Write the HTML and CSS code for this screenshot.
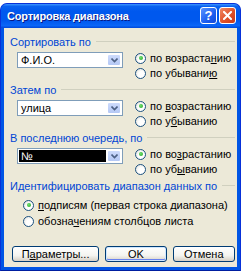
FILE: index.html
```html
<!DOCTYPE html>
<html lang="ru">
<head>
    <meta charset="UTF-8">
    <title>Сортировка диапазона</title>
    <link rel="stylesheet" href="styles.css">
</head>
<body>

    <!-- Dialog window -->
    <div class="window">
        <div class="titlebar">
            <span class="title">Сортировка диапазона</span>
            <div class="title-buttons">
                <span class="tbtn help">?</span>
                <span class="tbtn close">
                    <svg width="9" height="9" viewBox="0 0 9 9">
                        <path d="M1 1 L8 8 M8 1 L1 8" stroke="#fff" stroke-width="2" stroke-linecap="square"/>
                    </svg>
                </span>
            </div>
        </div>

        <div class="client">
            <!-- Sort by -->
            <div class="legend"><span>Сортировать по</span></div>
            <div class="sort-row">
                <div class="combo">
                    <span class="combo-text">Ф.И.О.</span>
                    <span class="combo-btn"><svg width="7" height="5" viewBox="0 0 7 5"><path d="M0.5 0.5 L3.5 3.5 L6.5 0.5" fill="none" stroke="#4d6185" stroke-width="1.6"/></svg></span>
                </div>
                <div class="radios">
                    <div class="radio checked"><span class="circle"></span><span>по возраста<u>н</u>ию</span></div>
                    <div class="radio"><span class="circle"></span><span>по убывани<u>ю</u></span></div>
                </div>
            </div>

            <!-- Then by -->
            <div class="legend"><span>Затем по</span></div>
            <div class="sort-row">
                <div class="combo">
                    <span class="combo-text">улица</span>
                    <span class="combo-btn"><svg width="7" height="5" viewBox="0 0 7 5"><path d="M0.5 0.5 L3.5 3.5 L6.5 0.5" fill="none" stroke="#4d6185" stroke-width="1.6"/></svg></span>
                </div>
                <div class="radios">
                    <div class="radio checked"><span class="circle"></span><span>по <u>в</u>озрастанию</span></div>
                    <div class="radio"><span class="circle"></span><span>по у<u>б</u>ыванию</span></div>
                </div>
            </div>

            <!-- Last by -->
            <div class="legend"><span>В последнюю очередь, по</span></div>
            <div class="sort-row">
                <div class="combo">
                    <span class="combo-text selected">№</span>
                    <span class="combo-btn"><svg width="7" height="5" viewBox="0 0 7 5"><path d="M0.5 0.5 L3.5 3.5 L6.5 0.5" fill="none" stroke="#4d6185" stroke-width="1.6"/></svg></span>
                </div>
                <div class="radios">
                    <div class="radio checked"><span class="circle"></span><span>по во<u>з</u>растанию</span></div>
                    <div class="radio"><span class="circle"></span><span>по уб<u>ы</u>ванию</span></div>
                </div>
            </div>

            <!-- Range identification -->
            <div class="legend"><span>Идентифицировать диапазон данных по</span></div>
            <div class="ident">
                <div class="radio checked"><span class="circle"></span><span><u>п</u>одписям (первая строка диапазона)</span></div>
                <div class="radio"><span class="circle"></span><span>обозна<u>ч</u>ениям столбцов листа</span></div>
            </div>

            <!-- Buttons -->
            <div class="buttons">
                <span class="btn btn-params">П<u>а</u>раметры...</span>
                <span class="btn btn-default">OK</span>
                <span class="btn btn-cancel">Отмена</span>
            </div>
        </div>
    </div>

</body>
</html>
```

FILE: styles.css
```css
/* Page */
body {
    margin: 0;
    width: 243px;
    height: 276px;
    overflow: hidden;
    background: #fff;
    font-family: "Liberation Sans", Arial, sans-serif;
    font-size: 11px;
    color: #000;
}

/* Window frame */
.window {
    margin-top: 3px;
    width: 241px;
    height: 268px;
    box-sizing: border-box;
    display: flex;
    flex-direction: column;
    background: #0055e5;
    border: 1px solid #0831d9;
    border-bottom-color: #001ea0;
    border-radius: 7px 7px 0 0;
}

/* Title bar */
.titlebar {
    height: 24px;
    display: flex;
    align-items: flex-start;
    justify-content: space-between;
    padding: 0 4px 0 6px;
    border-radius: 6px 6px 0 0;
    background: linear-gradient(to bottom, #3d95ff 0%, #0a62f0 10%, #0058ee 30%, #0058ee 70%, #0a66f7 90%, #0048d8 100%);
}

.title {
    margin-top: 6px;
    color: #fff;
    font-weight: bold;
    font-size: 11px;
    letter-spacing: -0.2px;
    text-shadow: 1px 1px #0a1883;
}

.title-buttons {
    margin-top: 3px;
    display: flex;
    gap: 2px;
}

.tbtn {
    width: 17px;
    height: 17px;
    box-sizing: border-box;
    display: flex;
    align-items: center;
    justify-content: center;
    border: 1px solid #fff;
    border-radius: 3px;
    color: #fff;
    font-weight: bold;
    font-size: 13px;
}

.help {
    background: linear-gradient(135deg, #5b93ff 0%, #1c5ef0 60%, #1248d8 100%);
}

.close {
    background: linear-gradient(135deg, #f08a66 0%, #e0522a 55%, #c8391a 100%);
}

/* Client area */
.client {
    flex: 1;
    margin: 0 3px 3px;
    padding: 7px 2px 0 6px;
    background: #ece9d8;
}

/* Group label with line */
.legend {
    display: flex;
    align-items: center;
    height: 13px;
    color: #0046d5;
}

.legend::after {
    content: "";
    flex: 1;
    height: 1px;
    margin-left: 5px;
    background: #d0d0bf;
}

.legend + .sort-row {
    margin-top: 3px;
}

.sort-row + .legend {
    margin-top: 3px;
}

.sort-row {
    display: flex;
    align-items: flex-start;
}

/* Combo box */
.combo {
    margin: 1px 0 0 7px;
    width: 106px;
    height: 16px;
    box-sizing: border-box;
    display: flex;
    padding: 1px;
    background: #fff;
    border: 1px solid #7f9db9;
}

.combo-text {
    flex: 1;
    padding-left: 2px;
    line-height: 12px;
}

.combo-text.selected {
    background: #000;
    color: #fff;
    margin-right: 1px;
}

.combo-btn {
    width: 14px;
    display: flex;
    align-items: center;
    justify-content: center;
    box-sizing: border-box;
    border: 1px solid #fff;
    border-radius: 2px;
    background: linear-gradient(to bottom, #cddbfc, #b4c8f5);
}

/* Radio buttons */
.radios {
    margin-left: 12px;
    display: flex;
    flex-direction: column;
    gap: 1px;
}

.radio {
    display: flex;
    align-items: center;
    height: 14px;
    white-space: nowrap;
}

.circle {
    width: 11px;
    height: 11px;
    box-sizing: border-box;
    margin-right: 4px;
    border: 1px solid #1c5180;
    border-radius: 50%;
    background: radial-gradient(circle at 65% 65%, #fff 40%, #dcdcd4 100%);
    display: flex;
    align-items: center;
    justify-content: center;
}

.radio.checked .circle::after {
    content: "";
    width: 4px;
    height: 4px;
    border-radius: 50%;
    background: radial-gradient(circle at 40% 40%, #6ee06e, #21a121);
}

/* Range identification */
.legend + .ident {
    margin-top: 6px;
}

.ident {
    padding-left: 13px;
    display: flex;
    flex-direction: column;
    gap: 2px;
}

/* Dialog buttons */
.buttons {
    margin-top: 18px;
    display: flex;
    gap: 6px;
    padding-left: 2px;
}

.btn {
    width: 62px;
    height: 16px;
    box-sizing: border-box;
    display: flex;
    align-items: center;
    justify-content: center;
    border: 1px solid #003c74;
    border-radius: 3px;
    background: linear-gradient(to bottom, #fff 0%, #f4f4f0 60%, #d6d0c5 100%);
}

.btn-params {
    width: 88px;
}

.btn-cancel {
    width: 63px;
}

.btn-default {
    box-shadow: inset 0 0 0 1px #cee7ff, inset 0 -1px 0 1px #6982ee;
}
```
